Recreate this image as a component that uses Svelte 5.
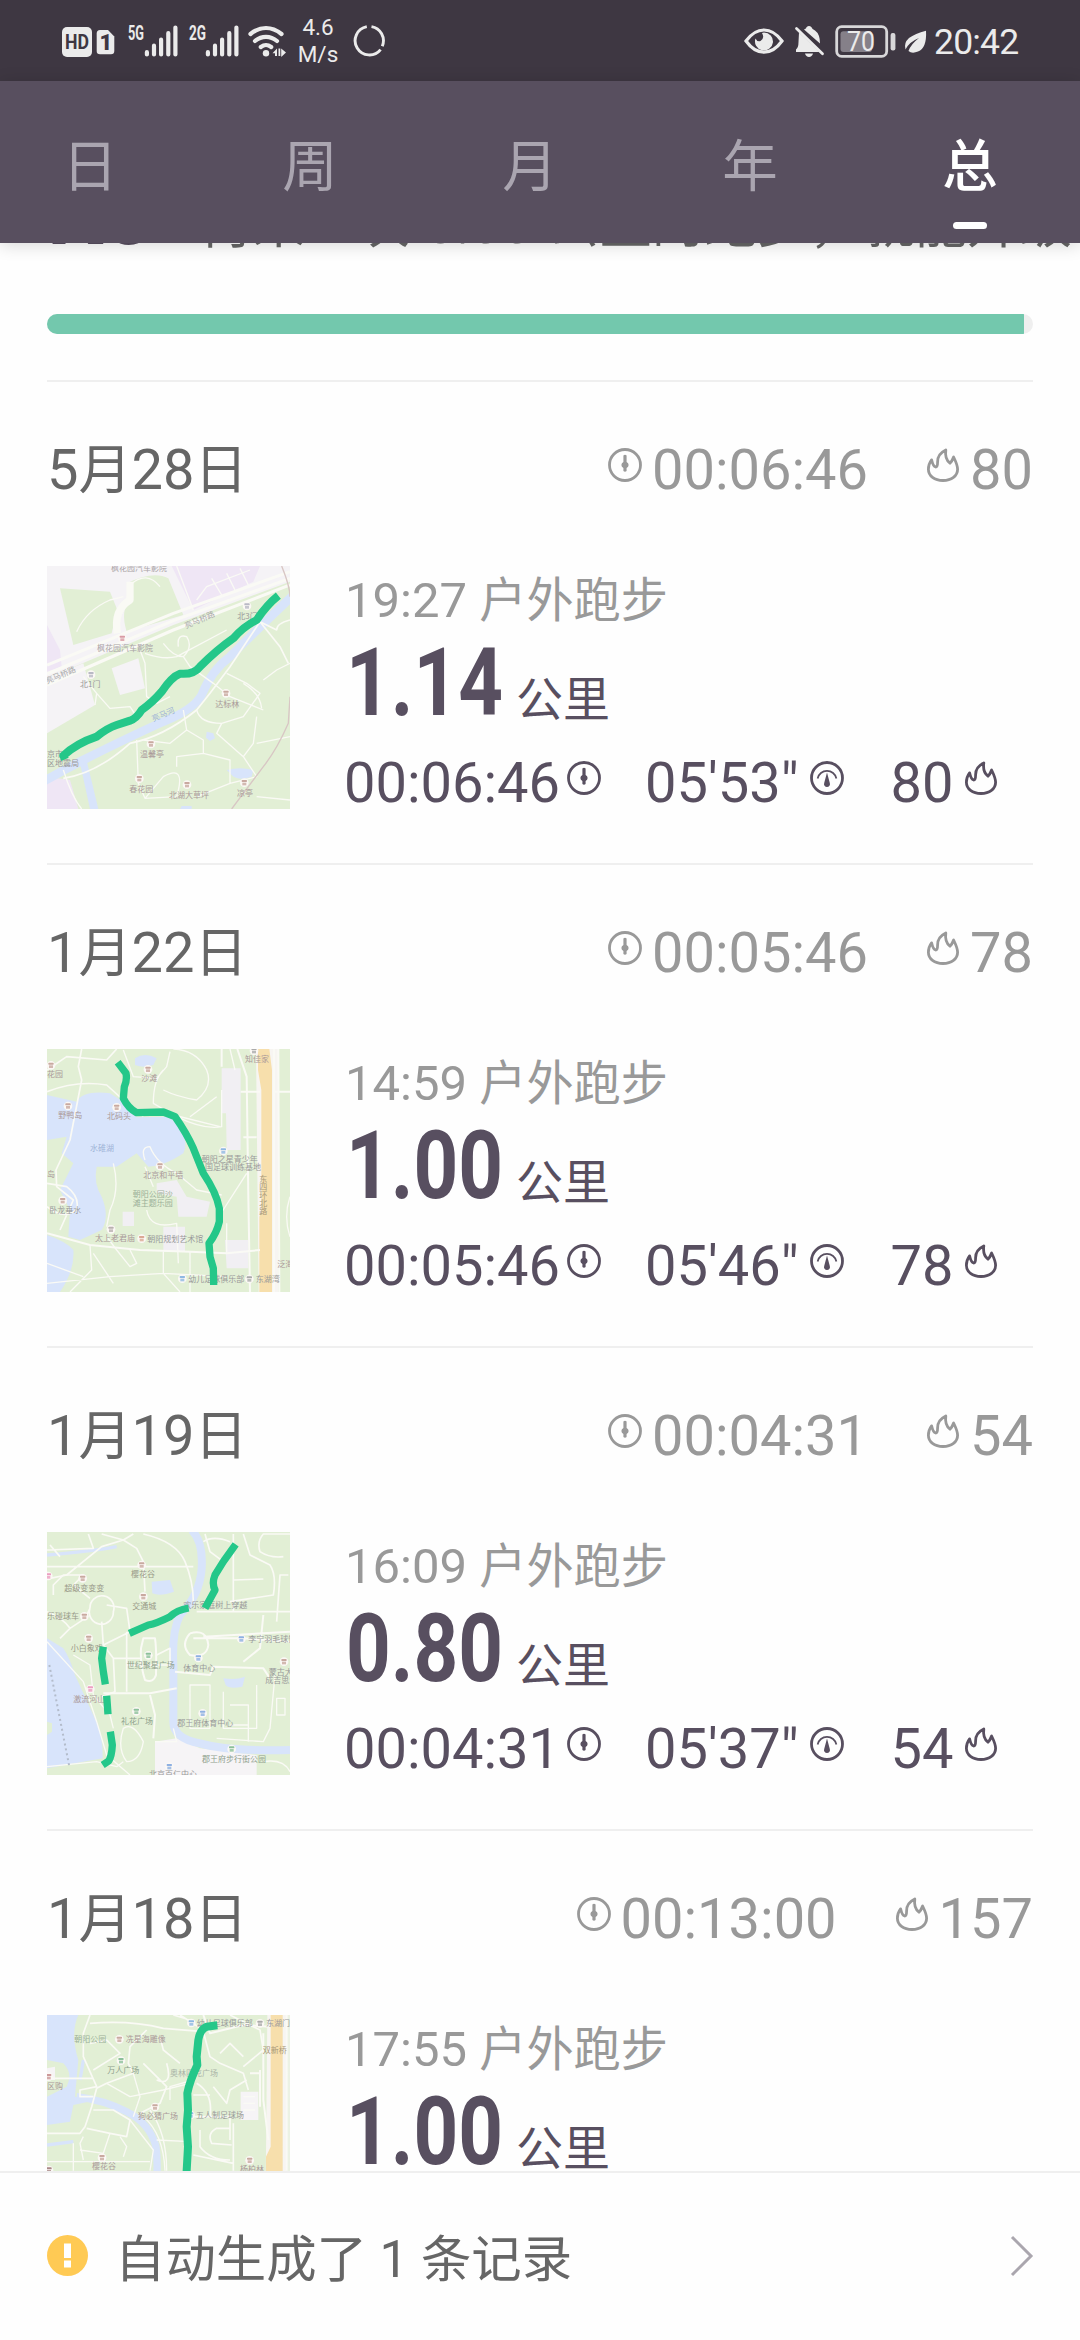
<script>
  const tabs = ['日', '周', '月', '年', '总'];
  const active = '总';

  const split = (text) => text.split(/([\u4e00-\u9fff，]+)/).filter((s) => s !== '');
  const isHan = (s) => /[\u4e00-\u9fff，]/.test(s);

  // Map sketches. Each drawing uses 3 units per pixel on a 729-unit square.
  const maps = {
    river: {
      box: '51 48 729 729',
      areas: [
        ['#f5f3f6', 'M51 48H780V95L430 225 51 385Z'],
        ['#f5f3f6', 'M51 385L160 340 195 465 51 550Z'],
        ['#efe6f5', 'M425 48H690L670 95 490 180Z'],
        ['#efe6f5', 'M51 680L120 690 145 777H51Z M51 225L90 300 95 350 51 365Z'],
        ['#e2efd5', 'M90 115L240 125 262 180 245 250 130 285Z'],
        ['#e2efd5', 'M290 100Q370 60 415 85L460 195 290 245Q270 180 300 150Z'],
        ['#f5f3f6', 'M245 355L325 325 345 415 270 435Z'],
        ['#d8e4fb', 'M530 545l20 5 5 15-15 8-12-10Z M590 660q40-10 80 0l-5 20q-40 15-60-5Z M150 640L170 632 205 777H180Z M455 768h30v9h-35Z']
      ],
      rivers: [[26, 'M40 695Q100 660 160 630 300 560 400 515 490 480 515 435 545 360 600 320 700 220 790 135']],
      roads: [
        [9, 'M51 345L430 190 780 65M51 372L430 212 780 85M51 405L430 240 780 105'],
        [22, 'M300 95L300 150Q250 180 262 250'],
        [4, 'M140 245Q170 180 240 150L280 140M300 105Q350 60 390 110M500 150L530 110 660 60M545 85l30 50M590 70l25 50M630 55l25 50M490 180L440 48'],
        [4, 'M330 300L345 340 350 440 380 460M400 280Q430 320 460 320 490 290 470 260 440 250 445 290M460 320L480 350 550 400 600 440 700 480M345 310Q400 330 440 320L590 240M200 430L240 475 300 470 320 500M195 465L200 430 160 380'],
        [5, 'M100 685Q200 670 300 580 400 560 500 480L540 430 600 350 690 215 750 290 775 340M690 215L740 240Q740 220 780 210'],
        [4, 'M100 660Q125 740 155 777M320 570L325 700 345 745 400 680Q470 640 440 740L345 745M460 480L470 540 420 580 340 570M500 480Q510 520 575 520L640 500 690 430 650 400 590 370M575 520L560 550 640 620 670 580 680 500M470 540L520 570 520 610 600 630 600 700 500 740M600 700L680 680 640 620M680 740L780 750M680 580L780 560M700 390L740 360 780 340M640 400Q690 430 695 475M380 460L420 440M520 610L440 620 440 650']
      ],
      rails: ['M755 48Q780 110 780 140M780 440L775 520Q740 600 700 650L605 777'],
      route: [24, 'M105 628L100 617Q140 580 200 560 230 535 260 525L300 512Q320 505 335 480 370 455 395 425 425 380 450 371 490 375 510 350 560 300 610 265 640 230 680 210 710 165 745 137'],
      pins: [[277, 265, '#d99aa5'], [183, 374, '#b9b9c5'], [651, 168, '#b9b9c5'], [588, 430, '#c9a9a0'], [363, 582, '#c9a9a0'], [328, 686, '#c9a9a0'], [471, 704, '#c9a9a0'], [643, 698, '#c9a9a0']],
      labels: [
        [243, 62, '枫花园汽车影院', '#aaa3a6'], [201, 302, '枫花园汽车影院', '#aaa3a6'], [150, 410, '北1门', '#999'], [622, 206, '北3门', '#999'],
        [468, 236, '亮马桥路', '#aaa', -23], [51, 402, '亮马桥路', '#aaa', -23], [370, 515, '亮马河', '#9eb3d6', -23],
        [556, 470, '达标林', '#a99'], [330, 620, '温馨亭', '#a99'], [298, 726, '春花园', '#a99'], [417, 743, '北湖大草坪', '#a99'], [621, 737, '凉亭', '#a99'],
        [51, 622, '京市', '#999'], [51, 647, '区地震局', '#999']
      ]
    },
    lake: {
      box: '51 57 729 729',
      areas: [
        ['#d8e4fb', 'M51 195L140 215Q160 180 240 190L280 215 320 262 420 260 455 300Q475 340 460 370 400 410 355 410L320 370 260 410 200 410Q190 460 215 500 240 560 215 600L150 630 115 620 120 540 90 480 130 400 95 370 110 320 51 330Z'],
        ['#d8e4fb', 'M51 615Q110 635 130 660 135 720 90 786H51Z M315 85q30-20 65 0l-10 20q-30 10-55 0Z'],
        ['#f1eff3', 'M575 115H632V360H590L588 250 575 250Z M585 630H655V715H590Z M380 460L440 450 470 500 540 515 530 560 445 560 440 500 380 490Z M400 590H465V665H400Z M278 545H312V588H278Z'],
        ['#f7f5f2', 'M678 57H745V786H686Z'],
        ['#f7dfac', 'M684 57H718L726 120V786H688V560L694 545V180L684 120Z']
      ],
      rivers: [],
      roads: [
        [5, 'M155 57L145 110 155 150 120 330 78 420 80 470 130 510 90 600M51 185Q140 150 230 165L280 210 340 260M51 120L110 80 230 90 260 57M51 460L110 470Q150 500 140 540 100 570 51 530'],
        [4, 'M280 60L310 140 380 145 410 110 420 65M430 57Q500 60 530 120 550 170 500 210 440 200 400 180M400 120Q370 150 370 220L430 255 570 290M440 260Q520 300 575 290V180M345 390Q330 350 360 350 380 400 440 430L500 480 575 495M345 410L370 470M250 400Q270 480 240 540L230 590'],
        [6, 'M51 610L180 645 330 660 480 665 590 670 690 660M575 57V110M622 57L650 140 655 500 660 786M732 57V786M745 57L748 786M632 185H690M640 322H680M732 185H780'],
        [4, 'M180 645L185 720 120 786M230 620L260 660 300 710 320 700 300 660M51 760L240 740 400 730 590 740M480 665L480 786M350 540Q360 600 440 580L445 700M560 570L650 430M400 665V730L450 786M600 57L615 120M560 200L480 260M190 670L250 760M590 580V670M780 500Q760 560 780 620M51 700L160 740']
      ],
      rails: [],
      route: [22, 'M263 97L288 130Q292 150 283 170L280 205Q295 235 320 248L400 246 435 260Q470 310 490 355L520 430Q560 490 568 535L568 575Q560 610 537 640L540 680 550 715 551 765'],
      pins: [[63, 106, '#c9a9a0'], [354, 118, '#c9a9a0'], [114, 228, '#c9a9a0'], [260, 232, '#c9a9a0'], [390, 408, '#c9a9a0'], [98, 512, '#c9a9a0'], [243, 598, '#b9b0b0'], [335, 626, '#dba894'], [580, 363, '#8eb8e2'], [457, 746, '#8eb8e2'], [672, 62, '#aaa'], [658, 747, '#aaa']],
      labels: [
        [51, 141, '花园', '#a99'], [334, 152, '沙滩', '#a99'], [85, 263, '野鸭岛', '#a99'], [231, 268, '北码头', '#a99'], [180, 364, '水碓湖', '#9eb3d6'], [340, 443, '北京和平墙', '#a99'],
        [308, 502, '朝阳公园沙', '#9bb098'], [308, 528, '滩主题乐园', '#9bb098'], [515, 396, '朝阳之星青少年', '#999'], [525, 420, '国足球训练基地', '#999'],
        [58, 548, '卧龙垂水', '#999'], [195, 633, '太上老君庙', '#a99'], [352, 635, '朝阳规划艺术馆', '#999'], [475, 755, '幼儿足球俱乐部', '#999'], [677, 755, '东湖湾', '#999'],
        [51, 442, '岛', '#a99'], [742, 710, '泛海', '#a99'], [645, 96, '知佳家', '#a99'],
        [688, 455, '东', '#a89878'], [688, 479, '四', '#a89878'], [688, 503, '环', '#a89878'], [688, 527, '北', '#a89878'], [688, 551, '路', '#a89878']
      ]
    },
    park: {
      box: '51 51 729 729',
      areas: [
        ['#d8e4fb', 'M51 370L100 400Q120 430 135 480L190 600Q220 650 218 730L51 760Z M365 200l55-5 12 35q-40 15-65 5Z M580 490q40 5 65-5l-8 30q-40 8-50-5Z'],
        ['#f6f4f6', 'M375 680L440 670 510 700 680 720V780H375Z'],
        ['#e2efd5', 'M51 620l15 5v25l-15 10Z']
      ],
      rivers: [[24, 'M485 45Q520 80 515 160 510 240 450 300 425 350 430 450 430 560 430 620 430 670 510 685 600 710 780 705'], [10, 'M51 120Q180 110 260 95']],
      roads: [
        [5, 'M215 57L280 75 310 57M175 57L190 100 51 105M280 75L320 100 340 140 345 230M51 155H490M280 75L215 95 110 180 60 190M60 90L90 125M340 57Q440 80 465 140 490 200 490 260'],
        [5, 'M525 57L540 110 580 140 610 80M520 80Q550 60 600 80M610 57V195L700 192M640 57L660 120 720 150Q740 180 730 240L600 260M780 57H700Q680 80 690 110 720 130 760 125M610 195V290M500 290H780M775 180H750L740 320'],
        [5, 'M51 290Q100 310 120 340L165 310 180 280M120 340L90 370M180 280A36 36 0 1 0 250 290 36 36 0 1 0 180 280M180 250L130 210 160 180 100 180 70 210 70 240M215 320L220 390 300 350 290 280 230 270M220 390L250 430 255 530 215 545M290 350V530M290 450H420V400L380 420M250 430H330'],
        [6, 'M340 370H375Q380 400 378 480 370 505 345 495 330 450 333 400ZM360 540L375 600 370 670M220 535H360L440 520M435 470L540 480 550 455 700 460 720 490M480 355Q530 340 535 390 530 430 480 420 450 390 480 355M490 370H640L780 380M520 365L780 350M700 300L690 400 640 440'],
        [4, 'M480 510H540V640H480ZM580 530V640H680V510M600 570H655V680M600 630H655M735 480L720 640 700 680 560 670M740 550h25v50h-25ZM51 380L160 500 200 620 230 720 300 780M280 640Q310 620 340 680 330 740 290 740 260 700 280 640M130 420L180 450 190 540 240 600 250 640M51 755L200 740 260 755 280 740M375 680H440L430 640M700 740Q760 730 780 770']
      ],
      rails: [],
      dots: 'M58 450L118 755',
      route: [22, 'M617 88L580 140 555 180Q545 205 555 225L525 280M476 279Q440 285 420 305 380 325 355 330L298 355M220 395L215 430 220 470 226 508M230 542L234 598M241 650L247 690Q245 725 236 738L218 750'],
      pins: [[335, 150, '#c9a9a0'], [158, 190, '#c9a9a0'], [340, 245, '#c9a9a0'], [163, 304, '#c9a9a0'], [176, 370, '#c9a9a0'], [55, 183, '#ec9ec2'], [181, 522, '#ec9ec2'], [355, 421, '#8cc09a'], [319, 589, '#8cc09a'], [605, 702, '#8cc09a'], [634, 372, '#8eb0e2'], [505, 429, '#8eb0e2'], [518, 595, '#8eb0e2'], [418, 755, '#8eb0e2'], [762, 440, '#c9a9a0']],
      labels: [
        [303, 186, '樱花谷', '#998'], [103, 228, '超级变变变', '#998'], [307, 282, '交通城', '#998'], [51, 312, '乐碰球车', '#998'], [122, 407, '小白象戏', '#998'],
        [460, 280, '欢乐家庭树上穿越', '#999'], [655, 380, '李宁羽毛球馆', '#999'], [290, 458, '世纪聚星广场', '#8ea08c'], [460, 467, '体育中心', '#999'],
        [130, 560, '激流河山', '#a99'], [273, 626, '礼花广场', '#8ea08c'], [442, 632, '郡王府体育中心', '#999'], [516, 740, '郡王府步行街公园', '#8ea08c'], [357, 786, '北京百仁中心', '#999'],
        [716, 480, '蒙古大', '#999'], [706, 505, '成吉思汗', '#999']
      ]
    },
    east: {
      box: '51 45 729 729',
      areas: [
        ['#d8e4fb', 'M51 45H145Q120 100 145 180L135 290 200 300 130 315 120 365 51 375V290L110 260Q130 220 100 190L51 180Z'],
        ['#f6f4f6', 'M51 205L75 200V240H51Z M632 275H685V360H632Z'],
        ['#f7f5f2', 'M712 45H780V774H705Z'],
        ['#f7dfac', 'M722 45H758V774H708V470L722 440Z'],
        ['#ecf2e4', 'M768 45H780V774H768Z']
      ],
      rivers: [[22, 'M140 290Q220 300 290 335 360 370 378 440 385 500 378 560'], [10, 'M51 435L130 425'], [10, 'M150 240L160 180']],
      roads: [
        [5, 'M180 45L160 100 160 170 200 260 150 270 150 290 190 290M51 235H190M180 70Q300 60 400 85L520 95M350 90L300 140 295 190 310 220 230 250 200 265M190 210L270 160 230 120 180 130'],
        [5, 'M390 110L400 150 450 190M340 190L410 260 390 310 330 340M410 190Q430 260 380 240M450 45L520 90M430 45L480 60M200 265L185 320 165 380 150 400 51 400M190 330H250L300 360 290 410 240 400 170 385'],
        [4, 'M230 250L300 290 400 270 480 250M310 220L330 290 310 350M160 410L150 430 160 480M240 400L220 460 150 450M300 360L370 450 360 512M51 485H360M130 430V512M270 410L290 440 280 470M340 350Q400 400 405 512M360 330Q410 400 410 512'],
        [5, 'M520 95L540 170 570 190 640 220 655 270M600 45L690 90 700 150 640 200M570 160L600 130 640 170M500 250Q550 280 540 350M490 285H540M550 260L590 310 600 270 650 240M600 385H560Q530 400 545 430L605 435M490 350H600V420M510 390V440Q540 480 600 480M610 370V512M490 465L610 490'],
        [6, 'M700 100V300L715 420M770 45V512M520 45L540 100 640 75 720 80M690 210V320M660 220H690'],
        [4, 'M380 420L480 425M420 300V260L490 240M640 290h35M640 310h35M640 330h35']
      ],
      rails: [],
      route: [24, 'M562 76L530 80Q510 88 505 120L500 170 502 195Q480 240 472 280L474 330 470 380 474 440 469 530V774'],
      pins: [[268, 118, '#c9a9a0'], [273, 182, '#8cc09a'], [484, 69, '#8eb8e2'], [375, 321, '#c9a9a0'], [216, 473, '#c9a9a0'], [659, 481, '#c9a9a0'], [56, 230, '#c99'], [690, 70, '#aaa'], [482, 345, '#8eb8e2'], [57, 510, '#a88']],
      labels: [
        [133, 127, '朝阳公园', '#9bb098'], [287, 127, '冼星海雕像', '#a99'], [232, 219, '万人广场', '#8ea08c'], [500, 77, '幼儿足球俱乐部', '#999'], [708, 77, '东湖门', '#999'],
        [698, 160, '双新桥', '#a89878'], [420, 228, '奥林匹克广场', '#aab5a8'], [324, 357, '狗必猜广场', '#a99'], [498, 354, '五人制足球场', '#999'], [186, 507, '樱花谷', '#a99'], [630, 516, '杨柏林', '#a99'], [51, 267, '区购', '#a99']
      ]
    }
  };

  const records = [
    { date: '5月28日', total: '00:06:46', kcal: '80', start: '19:27', km: '1.14', pace: `05'53"`, map: maps.river },
    { date: '1月22日', total: '00:05:46', kcal: '78', start: '14:59', km: '1.00', pace: `05'46"`, map: maps.lake },
    { date: '1月19日', total: '00:04:31', kcal: '54', start: '16:09', km: '0.80', pace: `05'37"`, map: maps.park },
    { date: '1月18日', total: '00:13:00', kcal: '157', start: '17:55', km: '1.00', pace: `13'00"`, map: maps.east }
  ];
</script>

{#snippet mixed(text)}{#each split(text) as part}<span class={isHan(part) ? 'han' : 'num'}>{part}</span>{/each}{/snippet}

{#snippet clock()}
  <svg class="icon" viewBox="0 0 34 34">
    <circle cx="17" cy="17" r="15.5" fill="none" stroke="currentColor" stroke-width="2.8" />
    <path d="M15.4 7.5Q17 6 18.6 7.5V14Q20.6 15 20.6 17T18.6 20V23Q17 24.6 15.4 23V20Q13.4 19 13.4 17T15.4 14Z" fill="currentColor" />
  </svg>
{/snippet}

{#snippet gauge()}
  <svg class="icon" viewBox="0 0 34 34">
    <circle cx="17" cy="17" r="15.5" fill="none" stroke="currentColor" stroke-width="2.8" />
    <path d="M7.6 17.5A9.6 9.6 0 0 1 26.4 17.5" fill="none" stroke="currentColor" stroke-width="1.7" />
    <path d="M17 11.5L19.8 22A3 3 0 1 1 14.2 22Z" fill="currentColor" />
  </svg>
{/snippet}

{#snippet flame()}
  <svg class="icon" viewBox="0 0 34 34">
    <path d="M19.8 2C14.5 4.5 11.5 9 11.6 14C11.6 17 11 19 9.6 19C7.5 18.5 6.4 15.5 5.6 11.8C3.2 15 2.4 18 2.4 21.3C2.4 28 8.5 32.5 17 32.5S31.6 28 31.6 21.3C31.6 17 29.5 13 27.6 9C26.6 11.5 26 13.5 24 15.2C20.5 12.5 19 7.5 19.8 2Z" fill="none" stroke="currentColor" stroke-width="2.8" stroke-linejoin="round" />
  </svg>
{/snippet}

{#snippet minimap(m)}
  <svg class="map" viewBox={m.box}>
    <rect width="800" height="800" fill="#e2efd5" />
    {#each m.areas as [fill, d]}<path {d} {fill} />{/each}
    {#each m.rivers as [w, d]}<path {d} fill="none" stroke="#d8e4fb" stroke-width={w} />{/each}
    {#each m.roads as [w, d]}<path {d} fill="none" stroke="#fafaf5" stroke-width={w} stroke-linejoin="round" />{/each}
    {#each m.rails as d}<path {d} fill="none" stroke="#d8c6c4" stroke-width="4" />{/each}
    {#if m.dots}<path d={m.dots} fill="none" stroke="#b3bccb" stroke-width="6" stroke-dasharray="6 9" />{/if}
    {#each m.pins as [x, y, c]}
      <circle cx={x} cy={y} r="13" fill="#fbf8f5" />
      <rect x={x - 8} y={y - 8} width="16" height="6" rx="2" fill={c} />
      <rect x={x - 6} y={y} width="12" height="8" fill={c} opacity="0.8" />
    {/each}
    {#each m.labels as [x, y, t, c, r]}
      <text {x} {y} fill={c} transform={r ? `rotate(${r} ${x} ${y})` : undefined}>{t}</text>
    {/each}
    <path d={m.route[1]} fill="none" stroke="#24c789" stroke-width={m.route[0]} stroke-linejoin="round" />
  </svg>
{/snippet}

<div class="screen">
  <div class="status">
    <svg class="signals" width="230" height="40" viewBox="60 20 230 40">
      <g fill="#ebebeb">
        <rect x="62" y="26" width="30" height="30" rx="5" />
        <path d="M100 29H108L114.3 35.5V50Q114.3 53.3 111 53.3H100Q96.7 53.3 96.7 50V32.5Q96.7 29 100 29Z" />
        <text x="128" y="38.7" class="net" textLength="16" lengthAdjust="spacingAndGlyphs">5G</text>
        <text x="189" y="38.7" class="net" textLength="17" lengthAdjust="spacingAndGlyphs">2G</text>
        <circle cx="266" cy="52.2" r="3.2" />
        <path d="M272.5 52.3L277 47.5V55H275V52.3Z M278.5 47.5H280.3V55H278.5Z M281.2 47.5L286 51.5 281.2 56Z" />
      </g>
      <text x="65" y="48.3" class="hd" textLength="24" lengthAdjust="spacingAndGlyphs">HD</text>
      <text x="99.5" y="49" class="sim">1</text>
      <g stroke="#ebebeb" stroke-width="4.2" stroke-linecap="round" fill="none">
        <path d="M146.9 51.2V53.4M154 44.7V53.4M161.1 38.7V53.4M168.3 32.2V53.4M175.4 26.6V53.4" />
        <path d="M207.9 51.2V53.4M215 44.7V53.4M222.1 38.7V53.4M229.3 32.2V53.4M236.4 26.6V53.4" />
        <path d="M250.5 33Q258 27 266 27T281.5 33M255 40Q260 35.8 266 35.8T277 40M260.8 46Q263.5 44 266 44T271.2 46" />
      </g>
    </svg>
    <div class="speed"><span>4.6</span><span>M/s</span></div>
    <svg class="ring" width="34" height="34" viewBox="352 24 34 34">
      <path d="M371.5 26.6A14.3 14.3 0 0 1 382.3 46.2M380.6 49.6A14.3 14.3 0 1 1 366.8 26.6" fill="none" stroke="#ebebeb" stroke-width="2.9" />
    </svg>
    <svg class="tray" width="184" height="40" viewBox="742 20 184 40">
      <path d="M745 40Q753 29 763 29T781 40Q773 51.2 763 51.2T745 40Z" fill="none" stroke="#ebebeb" stroke-width="3.2" />
      <path d="M763 31.5A9 9 0 1 1 754.5 37.5Q756 41 759.5 40 764 37 761 32Z" fill="#ebebeb" />
      <g fill="#ebebeb">
        <path d="M798 31.5L818.5 51H795V48.5Q797.5 46.5 797.5 41Z" />
        <path d="M803 28.5Q805.5 27.8 805.5 26.2 808 23.6 810.5 26.2 811 28 814 29.5 819 33 819 42.5Z" />
        <path d="M804 52.6H812Q811 56 808 56T804 52.6Z" />
      </g>
      <path d="M795.5 27.5L821.5 52.8" stroke="#ebebeb" stroke-width="2.8" stroke-linecap="round" />
      <rect x="839.5" y="30.3" width="31.5" height="20.7" rx="3" fill="#858089" />
      <rect x="835.7" y="25.7" width="50" height="29.6" rx="5" fill="none" stroke="#d8d7d9" stroke-width="2.8" />
      <rect x="889.6" y="32" width="4.8" height="17.4" rx="2" fill="#d8d7d9" />
      <text x="846" y="49.9" class="bat" textLength="28" lengthAdjust="spacingAndGlyphs">70</text>
      <path d="M925 29.7Q926 47 917 50.5 911 53 907.5 50 910 43 918 37 908 41 904.5 48.5 902.5 42 908 37 914 32.5 925 29.7Z" fill="#ebebeb" />
    </svg>
    <span class="time">20:42</span>
  </div>

  <nav class="tabs">
    {#each tabs as t}
      <div class="tab" class:active={t === active}><span>{t}</span></div>
    {/each}
  </nav>

  <main>
    <div class="level"><b>K5</b><p>{@render mixed('再来一次 6.00 公里的跑步，就能升级')}</p></div>
    <div class="progress"><div class="fill"></div></div>

    {#each records as r}
      <section>
        <header>
          <h2>{@render mixed(r.date)}</h2>
          <div class="sum">{@render clock()}<span>{r.total}</span></div>
          <div class="sum kcal">{@render flame()}<span>{r.kcal}</span></div>
        </header>
        <div class="run">
          {@render minimap(r.map)}
          <div class="info">
            <div class="kind">{@render mixed(r.start + ' 户外跑步')}</div>
            <div class="dist"><b>{r.km}</b><span class="han">公里</span></div>
            <div class="stats">
              <div class="stat"><span>{r.total}</span>{@render clock()}</div>
              <div class="stat pace"><span>{r.pace}</span>{@render gauge()}</div>
              <div class="stat burn"><span>{r.kcal}</span>{@render flame()}</div>
            </div>
          </div>
        </div>
      </section>
    {/each}
  </main>

  <footer>
    <svg width="41" height="41" viewBox="0 0 41 41">
      <circle cx="20.5" cy="20.5" r="20.5" fill="#ffca54" />
      <path d="M17 8.5H24V23H17ZM17 25.5H24V32.5H17Z" fill="#fff" />
    </svg>
    <p>{@render mixed('自动生成了 1 条记录')}</p>
    <svg class="arrow" width="24" height="42" viewBox="0 0 24 42">
      <path d="M2 2L21 21 2 40" fill="none" stroke="#aaa6ae" stroke-width="3" />
    </svg>
  </footer>
</div>

<style>
  :global(body) {
    background: #fefefe;
  }
  .screen {
    width: 1080px;
    height: 2340px;
    display: flex;
    flex-direction: column;
    overflow: hidden;
    background: #fefefe;
    color: #666;
    font-family: Roboto, 'Noto Sans CJK SC', sans-serif;
  }
  p, h2 {
    margin: 0;
    font-weight: 400;
  }
  svg {
    display: block;
    flex: none;
  }
  .han, .num {
    line-height: 0;
    white-space: pre;
  }

  .status {
    flex: none;
    height: 81px;
    display: flex;
    align-items: center;
    padding-left: 60px;
    box-sizing: border-box;
    background: #3e3742;
    color: #ebebeb;
  }
  .net {
    font-size: 19.5px;
    font-weight: 700;
  }
  .hd {
    font-size: 20px;
    font-weight: 700;
    fill: #3e3742;
  }
  .sim {
    font-size: 22px;
    font-weight: 900;
    fill: #3e3742;
  }
  .bat {
    font-size: 27px;
    fill: #ebebeb;
  }
  .speed {
    width: 56px;
    display: flex;
    flex-direction: column;
    align-items: center;
    font-size: 22.5px;
    line-height: 27px;
    margin: 1px 6px 0 0;
  }
  .tray {
    margin-left: 357px;
  }
  .time {
    margin: 2px 0 0 7px;
    font-size: 35.5px;
    letter-spacing: -0.8px;
    line-height: 40px;
  }

  .tabs {
    flex: none;
    position: relative;
    z-index: 1;
    height: 162px;
    display: flex;
    justify-content: space-between;
    padding: 0 82px 0 62px;
    box-sizing: border-box;
    background: #584f5f;
    box-shadow: 0 2px 16px rgba(0, 0, 0, 0.16);
  }
  .tab {
    width: 56px;
    display: flex;
    flex-direction: column;
    align-items: center;
    color: #aaa5b0;
    font-size: 55.5px;
    line-height: 60px;
    padding-top: 57px;
  }
  .active {
    color: #fff;
    font-weight: 500;
  }
  .active::after {
    content: '';
    width: 34px;
    height: 7px;
    border-radius: 4px;
    margin-top: 24px;
    background: #fff;
  }

  main {
    flex: 1;
    min-height: 0;
    overflow: hidden;
    padding: 0 47px;
  }
  .level {
    display: flex;
    height: 60px;
    margin-top: -49px;
    font-size: 56px;
    line-height: 60px;
    white-space: nowrap;
  }
  .level b {
    flex: none;
    width: 153px;
    line-height: 40px;
    font-size: 88px;
    color: #584f60;
  }
  .level p {
    flex: none;
  }
  .level .han {
    font-size: 52.5px;
  }
  .progress {
    height: 20px;
    margin: 60px 0 46px;
    border-radius: 10px;
    overflow: hidden;
    background: #efefef;
  }
  .fill {
    width: 977px;
    height: 20px;
    background: #73c8ad;
  }

  section {
    box-sizing: border-box;
    height: 483px;
    border-top: 2px solid #efefef;
    padding-top: 58px;
  }
  section header {
    display: flex;
    height: 60px;
    font-size: 56px;
    line-height: 60px;
  }
  h2 {
    flex: 1;
    font-size: 56px;
  }
  h2 .han {
    font-size: 53px;
  }
  .sum {
    display: flex;
    color: #999;
    gap: 10px;
  }
  .kcal {
    margin-left: 58px;
    gap: 10px;
  }
  .icon {
    width: 34px;
    height: 34px;
    margin-top: 8px;
  }

  .run {
    display: flex;
    margin-top: 66px;
  }
  .map {
    width: 243px;
    height: 243px;
  }
  .map text {
    font-size: 24px;
    font-family: 'Noto Sans CJK SC', sans-serif;
  }
  .info {
    margin-left: 54px;
    padding-top: 9px;
    color: #584f60;
  }
  .kind {
    height: 52px;
    padding-left: 1px;
    font-size: 49px;
    line-height: 52px;
    color: #999;
  }
  .kind .han {
    font-size: 47.2px;
  }
  .dist {
    display: flex;
    height: 80px;
    margin-top: 16px;
    padding-left: 2px;
    line-height: 80px;
  }
  .dist b {
    width: 170px;
    font-size: 94px;
    transform: scaleX(0.83);
    transform-origin: 0 0;
  }
  .dist .han {
    font-size: 47px;
    line-height: 114px;
  }
  .stats {
    display: flex;
    margin-top: 30px;
    font-size: 56px;
    line-height: 60px;
  }
  .stat {
    display: flex;
    gap: 7px;
  }
  .pace {
    margin-left: 44px;
    gap: 11px;
  }
  .burn {
    margin-left: 47px;
    gap: 10px;
  }

  footer {
    flex: none;
    display: flex;
    align-items: flex-start;
    height: 169px;
    box-sizing: border-box;
    border-top: 2px solid #efefef;
    padding: 62px 46px 0 47px;
    background: #fefefe;
  }
  footer p {
    flex: 1;
    margin-left: 27px;
    font-size: 51px;
    line-height: 50px;
  }
  footer .han {
    font-size: 50.4px;
  }
</style>
